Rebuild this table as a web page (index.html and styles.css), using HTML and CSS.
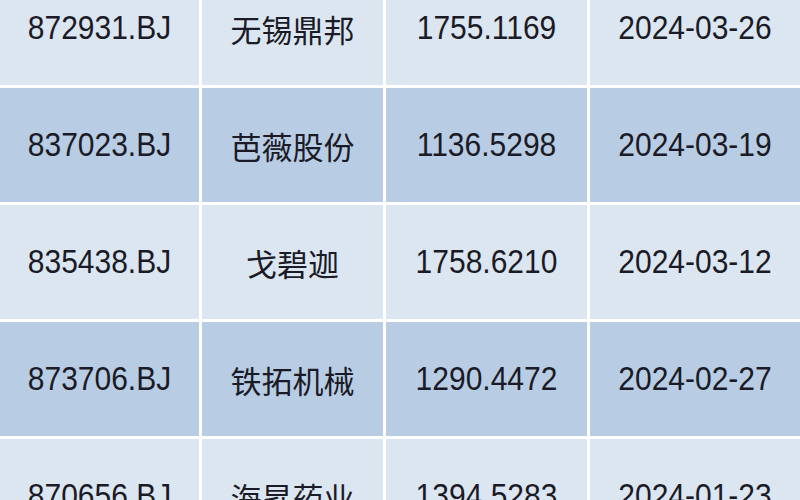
FILE: index.html
```html
<!DOCTYPE html>
<html lang="zh-CN">
<head>
<meta charset="utf-8">
<title>北交所股票列表</title>
<link rel="stylesheet" href="styles.css">
</head>
<body>
<div class="table">
  <div class="cell light"><span class="txt">872931.BJ</span></div>
  <div class="cell light name">无锡鼎邦</div>
  <div class="cell light"><span class="txt">1755.1169</span></div>
  <div class="cell light"><span class="txt">2024-03-26</span></div>

  <div class="cell dark"><span class="txt">837023.BJ</span></div>
  <div class="cell dark name">芭薇股份</div>
  <div class="cell dark"><span class="txt">1136.5298</span></div>
  <div class="cell dark"><span class="txt">2024-03-19</span></div>

  <div class="cell light"><span class="txt">835438.BJ</span></div>
  <div class="cell light name">戈碧迦</div>
  <div class="cell light"><span class="txt">1758.6210</span></div>
  <div class="cell light"><span class="txt">2024-03-12</span></div>

  <div class="cell dark"><span class="txt">873706.BJ</span></div>
  <div class="cell dark name">铁拓机械</div>
  <div class="cell dark"><span class="txt">1290.4472</span></div>
  <div class="cell dark"><span class="txt">2024-02-27</span></div>

  <div class="cell light"><span class="txt">870656.BJ</span></div>
  <div class="cell light name">海昇药业</div>
  <div class="cell light"><span class="txt">1394.5283</span></div>
  <div class="cell light"><span class="txt">2024-01-23</span></div>
</div>
</body>
</html>
```
FILE: styles.css
```css
html, body {
  margin: 0;
  padding: 0;
  background: #ffffff;
  overflow: hidden;
}

.table {
  display: grid;
  grid-template-columns: 199px 181px 201px 210px;
  grid-auto-rows: 114px;
  column-gap: 3px;
  row-gap: 3px;
  margin-top: -29px;
  width: 800px;
  font-family: "Liberation Sans", Arial, "Noto Sans CJK SC", sans-serif;
  font-size: 30px;
  color: #1a1b26;
}

.cell {
  display: flex;
  align-items: center;
  justify-content: center;
  white-space: nowrap;
}

.txt {
  display: inline-block;
  transform: scaleY(1.12);
}

.light {
  background: #dce6f1;
}

.dark {
  background: #b8cce4;
}

.name {
  font-family: "Noto Sans CJK SC", "Liberation Sans", sans-serif;
  font-size: 31px;
}
```
